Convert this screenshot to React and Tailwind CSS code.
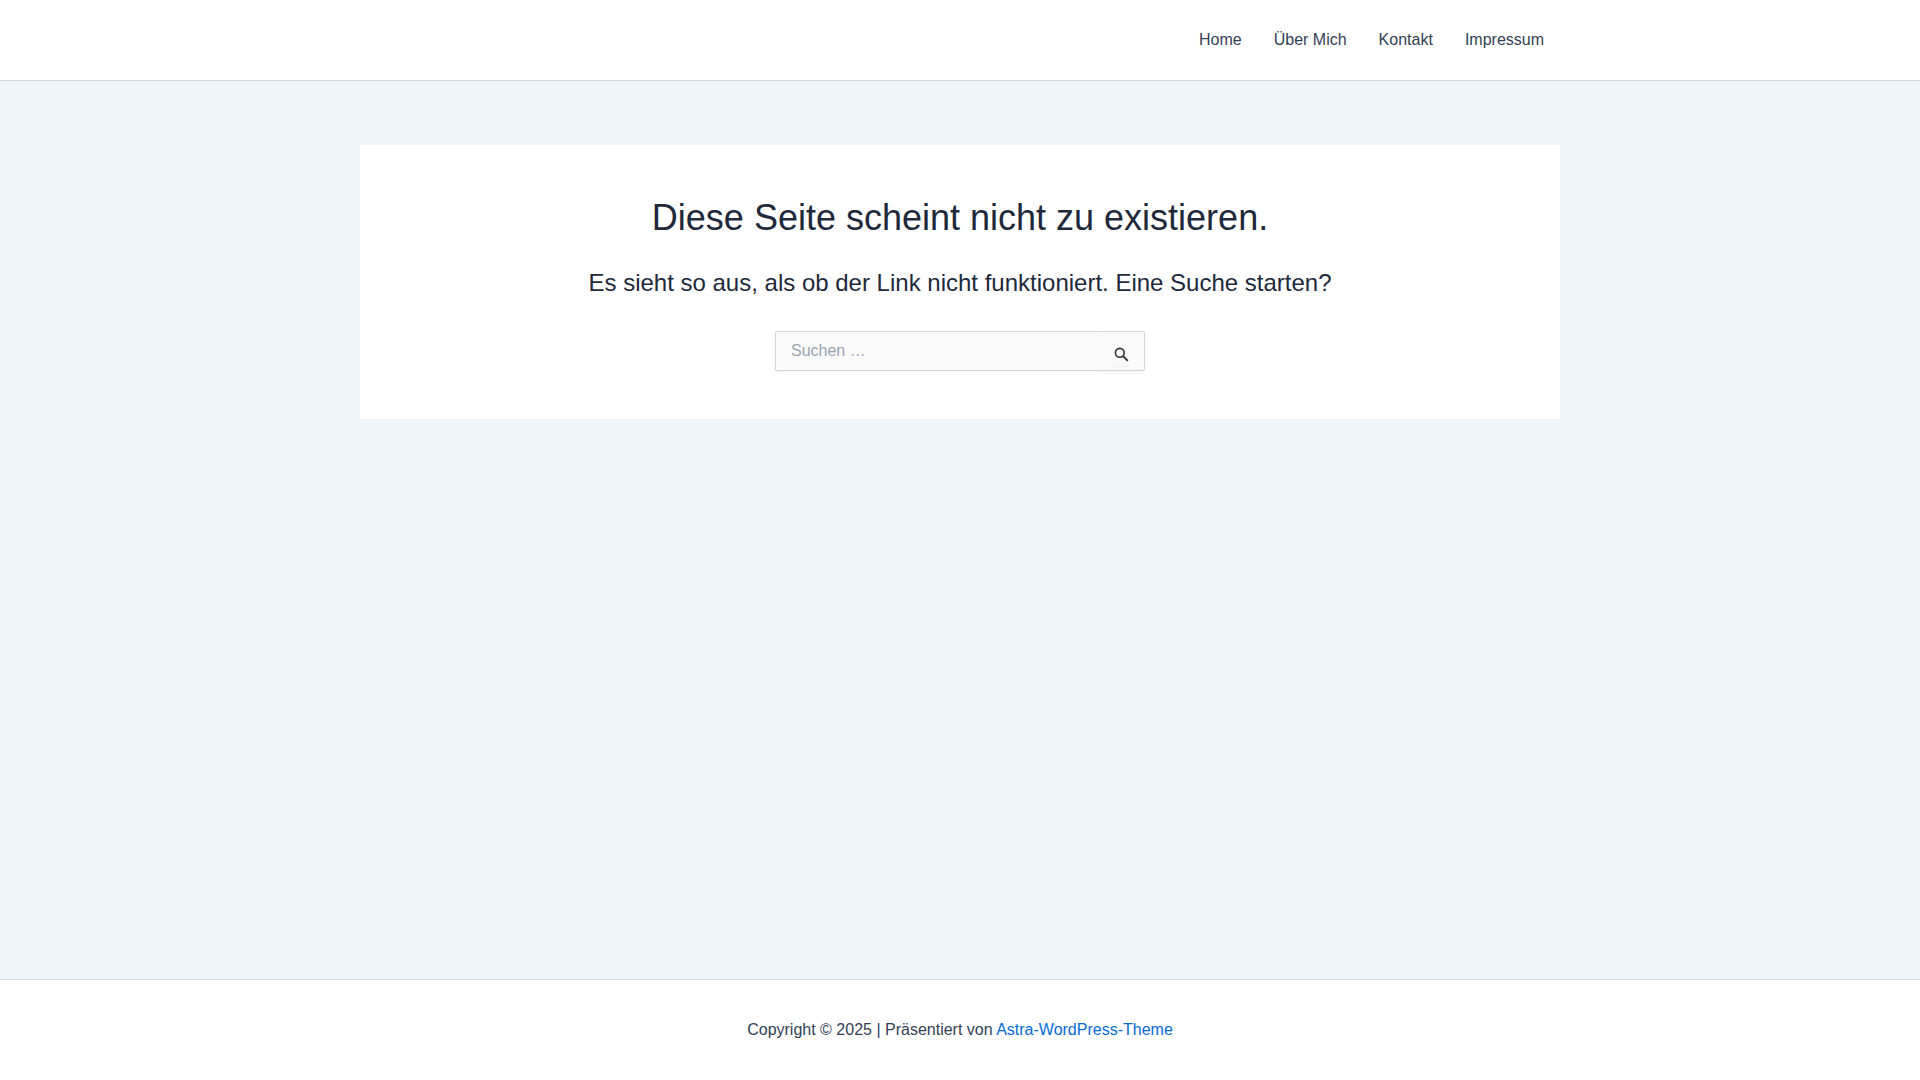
import React, { useState } from "react";

const navItems = [
  { label: "Home", href: "#home" },
  { label: "Über Mich", href: "#ueber-mich" },
  { label: "Kontakt", href: "#kontakt" },
  { label: "Impressum", href: "#impressum" },
];

const Header = () => (
  <header className="border-b border-[#d1d5db] bg-white">
    <div className="mx-auto flex h-20 max-w-[1240px] items-center justify-end px-5">
      <nav aria-label="Hauptmenü">
        <ul className="flex">
          {navItems.map((item) => (
            <li key={item.label}>
              <a
                href={item.href}
                className="block px-4 leading-20 hover:text-[#046bd2]"
              >
                {item.label}
              </a>
            </li>
          ))}
        </ul>
      </nav>
    </div>
  </header>
);

const SearchIcon = () => (
  <svg
    viewBox="0 0 15 15"
    className="size-[15px]"
    fill="none"
    stroke="currentColor"
    aria-hidden="true"
  >
    <circle cx="5.8" cy="5.8" r="4.4" strokeWidth="1.6" />
    <path d="M8.9 8.9 13.8 13.8" strokeWidth="1.9" />
  </svg>
);

const SearchForm = () => {
  const [query, setQuery] = useState("");

  return (
    <form
      role="search"
      onSubmit={(e) => e.preventDefault()}
      className="relative mx-auto w-[370px] max-w-full"
    >
      <input
        type="search"
        aria-label="Suchen nach:"
        placeholder="Suchen …"
        value={query}
        onChange={(e) => setQuery(e.target.value)}
        className="block h-10 w-full rounded-xs border border-[#d1d5db] bg-[#fafafa] pr-12 pl-[15px] text-[#666666] shadow-xs outline-none placeholder:text-[#9ca3af]"
      />
      <button
        type="submit"
        aria-label="Suche"
        className="absolute top-0 right-0 flex h-[42px] w-11 items-center rounded-xs pt-1 pl-[13px] text-[#333333] shadow-[0_1px_1px_rgba(0,0,0,0.04)]"
      >
        <span className="rounded-xs pb-1 -mb-1 shadow-[0_1px_1px_rgba(0,0,0,0.05)]">
          <SearchIcon />
        </span>
      </button>
    </form>
  );
};

const App = () => {
  return (
    <div className="flex min-h-screen flex-col bg-[#f0f5fa] font-['Liberation_Sans',Arial,sans-serif] text-base text-[#334155] antialiased">
      <Header />

      <main className="mx-auto w-full max-w-[1240px] flex-1 px-5 py-16">
        <section className="bg-white px-5 py-12 text-center text-[#1e293b]">
          <h1 className="mb-6 text-4xl leading-[50px]">
            Diese Seite scheint nicht zu existieren.
          </h1>
          <p className="mb-8 text-2xl">
            Es sieht so aus, als ob der Link nicht funktioniert. Eine Suche
            starten?
          </p>
          <SearchForm />
        </section>
      </main>

      <footer className="border-t border-[#d1d5db] bg-white py-9 text-center">
        <p className="leading-7">
          Copyright © 2025 | Präsentiert von{" "}
          <a href="#astra" className="text-[#046bd2]">
            Astra-WordPress-Theme
          </a>
        </p>
      </footer>
    </div>
  );
};

export default App;
